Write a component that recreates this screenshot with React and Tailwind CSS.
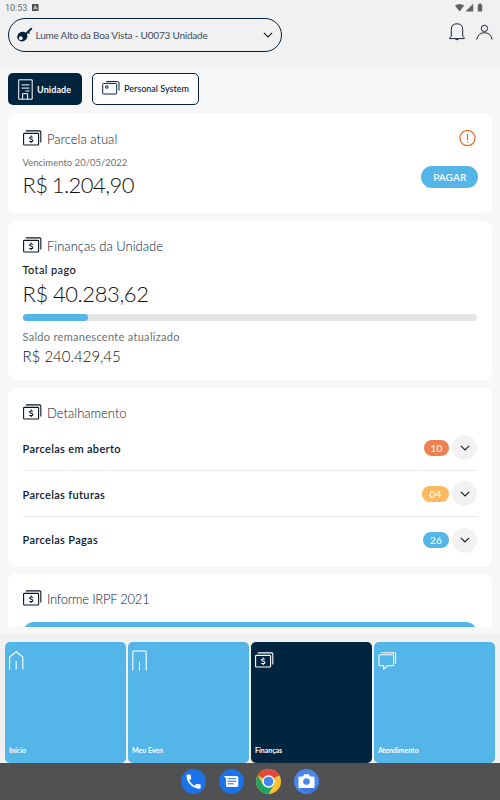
const ink = "#04213c";

function MoneyIcon({ color = "#0b1524", className = "" }) {
  return (
    <svg className={className} width="19" height="16" viewBox="0 0 19 16" fill="none" stroke={color} strokeWidth="1.1">
      <rect x="0.6" y="3.4" width="15" height="11.6" rx="0.8" />
      <path d="M2.8 0.9H16.7a1.1 1.1 0 0 1 1.1 1.1V12.5" />
      <path d="M9.9 7.5C9.5 6.7 6.6 6.6 6.6 8c0 1.5 3.3 1 3.3 2.5 0 1.5-3 1.4-3.5.4M8.2 5.6V6.8M8.2 11.7V13" strokeWidth="1.05" />
    </svg>
  );
}

function Chevron({ className = "" }) {
  return (
    <svg className={className} width="10" height="6" viewBox="0 0 10 6" fill="none" stroke="#111a26" strokeWidth="1.1">
      <path d="M0.9 0.8L5 4.9L9.1 0.8" />
    </svg>
  );
}

function Heading({ children, className = "" }) {
  return (
    <div className="flex h-4 items-center">
      <MoneyIcon className="shrink-0" />
      <h2 className={"ml-[5.5px] pt-px text-[13px] leading-4 font-light whitespace-nowrap text-[#04213c] " + className}>{children}</h2>
    </div>
  );
}

function Row({ label, count, pill, last }) {
  return (
    <div className={"flex h-[46px] items-center " + (last ? "" : "border-b border-[#e9e9e9]")}>
      <span className={"text-[11px] font-semibold tracking-[0.34px] whitespace-nowrap text-[#0b1b2e] " + (last ? "" : "pt-[3px]")}>{label}</span>
      <span className={"ml-auto flex h-4 items-center justify-center rounded-full pt-px text-[10px] tracking-[0.1px] text-white " + pill}>{count}</span>
      <span className="ml-[3px] flex size-[25px] items-center justify-center rounded-full bg-[#f2f2f2]">
        <Chevron />
      </span>
    </div>
  );
}

function HomeIcon() {
  return (
    <svg width="16" height="20" viewBox="0 0 16 20" fill="none" stroke="#fff" strokeWidth="1.1">
      <path d="M0.6 18.6V6L7.2 0.8L13.8 6V18.6M7.2 10V18.6" />
    </svg>
  );
}

function DoorIcon() {
  return (
    <svg width="16" height="21" viewBox="0 0 16 21" fill="none" stroke="#fff" strokeWidth="1.1">
      <path d="M0.8 20.4V1.8Q0.8 1 1.6 1H13.4Q14.2 1 14.2 1.8V20.4M7.5 12V20.4" />
    </svg>
  );
}

function ChatIcon() {
  return (
    <svg width="19" height="19" viewBox="0 0 19 19" fill="none" stroke="#fff" strokeWidth="1.1">
      <path d="M1.8 2.8H14.8Q15.6 2.8 15.6 3.6V13Q15.6 13.8 14.8 13.8H9.3L5.6 17V13.8H1.8Q1 13.8 1 13V3.6Q1 2.8 1.8 2.8Z" />
      <path d="M3.2 0.8H16.6Q17.6 0.8 17.6 1.8V11.5" />
    </svg>
  );
}

function Tile({ icon, label, dark, className = "" }) {
  return (
    <div className={"flex h-[120.5px] w-[120.7px] flex-col items-start justify-between rounded-[5px] px-1 pb-2 " + (dark ? "bg-[#01243f] " : "bg-[#54b6e8] ") + className}>
      {icon}
      <span className="text-[7px] leading-[10px] font-bold text-white">{label}</span>
    </div>
  );
}

export default function App() {
  return (
    <div className="flex h-[800px] w-[500px] flex-col overflow-hidden bg-[#f7f7f7] font-['Lato','Open_Sans',sans-serif]">
      <header className="h-[68px] shrink-0 bg-[#f1f1f1]">
        <div className="flex h-[15px] items-center pr-[17px] pl-[5px]">
          <span className="pt-px font-[Roboto] text-[9px] leading-[14px] text-[#6b6b6b]">10:53</span>
          <svg className="ml-[5px]" width="7" height="7" viewBox="0 0 7 7">
            <rect width="6.5" height="7" rx="0.6" fill="#4c4c4c" />
            <path d="M1.6 5.6L3.3 1.6L5 5.6M2.3 4.2H4.3" stroke="#f1f1f1" fill="none" strokeWidth="0.8" />
          </svg>
          <svg className="ml-auto" width="28" height="9" viewBox="0 0 28 9" fill="#616161">
            <path d="M0 2.6Q4.6 -0.8 9.2 2.6L4.6 8.4Z" />
            <path d="M18.2 0.7V8.4H10.5Z" />
            <path d="M22.8 1.4H24V0.6H26V1.4H27.2V8.4H22.8Z" />
          </svg>
        </div>
        <div className="flex pt-[3px] pl-2">
          <div className="flex h-[34px] w-[274px] items-center rounded-full border-[1.2px] border-[#04213c] pr-2 pl-[7.5px]">
            <svg width="16" height="16" viewBox="0 0 16 16">
              <path d="M6 9.6L14.8 1.2" stroke={ink} strokeWidth="1.9" />
              <path d="M10.9 5L12.6 6.4" stroke={ink} strokeWidth="1.3" />
              <ellipse cx="5.3" cy="9.6" rx="5.2" ry="4.7" transform="rotate(-32 5.3 9.6)" fill={ink} />
              <circle cx="3.8" cy="11.2" r="1.9" fill="#f1f1f1" />
            </svg>
            <span className="ml-[3px] pt-px text-[10px] tracking-[-0.21px] whitespace-nowrap text-[#3a4e62]">Lume Alto da Boa Vista - U0073 Unidade</span>
            <Chevron className="ml-auto" />
          </div>
          <svg className="mt-[5px] ml-[167px]" width="16" height="18" viewBox="0 0 16 18" fill="none" stroke="#1b2433" strokeWidth="1">
            <path d="M2.3 13.3V6.6Q2.3 0.8 8 0.8T13.7 6.6V13.3L15.3 14.7V15.6H0.7V14.7ZM6.3 16Q8 17.8 9.7 16" />
          </svg>
          <svg className="mt-[6px] ml-[11px]" width="17" height="17" viewBox="0 0 17 17" fill="none" stroke="#1b2433" strokeWidth="1">
            <circle cx="8.4" cy="4.4" r="3.2" />
            <path d="M0.7 15.5Q2.2 8.7 8.4 8.7T16.2 15.5" />
          </svg>
        </div>
      </header>

      <nav className="flex h-[37px] shrink-0 gap-[10px] pt-[5px] pl-2">
        <div className="flex w-[74px] items-center rounded-[5px] bg-[#01243f] pl-[10px]">
          <svg width="15" height="21" viewBox="0 0 15 21" fill="none" stroke="#fff" strokeWidth="1">
            <path d="M0.7 20.2V0.8H14.2V20.2Z" />
            <path d="M3.6 5.9H11.4M3.6 9.1H11.4M7.5 12H11.4M4.6 20V14.7H9.6V20" />
          </svg>
          <span className="ml-[4px] pt-0.5 text-[9px] font-bold tracking-[0.1px] text-white">Unidade</span>
        </div>
        <div className="flex w-[107px] rounded-[5px] border-[1.2px] border-[#04213c] bg-white pt-[7px] pl-[9px]">
          <svg width="18" height="14" viewBox="0 0 18 14" fill="none" stroke={ink} strokeWidth="1">
            <rect x="0.7" y="2.4" width="14" height="10.6" rx="1" />
            <path d="M4.2 0.6H15.6Q17 0.6 17 2V9.5" />
            <circle cx="4.8" cy="6" r="1.3" />
          </svg>
          <span className="ml-[4px] pt-px text-[9px] leading-[14px] font-medium whitespace-nowrap text-[#04213c]">Personal System</span>
        </div>
      </nav>

      <main className="mt-2 flex h-[514px] shrink-0 flex-col gap-2 overflow-hidden px-2">
        <section className="flex h-[100px] shrink-0 justify-between rounded-lg bg-white pt-[17px] pr-[14.5px] pl-[14.5px]">
          <div>
            <Heading>Parcela atual</Heading>
            <p className="mt-[10px] text-[9.5px] leading-[14px] whitespace-nowrap text-[#707070]">Vencimento 20/05/2022</p>
            <p className="mt-[2px] text-[22px] leading-[26px] font-light tracking-[-0.55px] [word-spacing:-1.2px] whitespace-nowrap text-[#111]">R$ 1.204,90</p>
          </div>
          <div className="flex flex-col items-end">
            <svg className="mr-[1px]" width="18" height="18" viewBox="0 0 18 18" fill="none" stroke="#ea6a22" strokeWidth="1.2">
              <circle cx="8.5" cy="8.1" r="7.6" />
              <path d="M8.5 3.9V9.9M8.5 11.3V12.6" />
            </svg>
            <button className="mt-[18px] h-[22px] w-[56.5px] rounded-full bg-[#54b6e8] pt-px pl-px text-[10px] font-semibold tracking-[0.1px] text-white">PAGAR</button>
          </div>
        </section>

        <section className="h-[159px] shrink-0 rounded-lg bg-white pr-[15px] pl-[14.5px] pt-4">
          <Heading>Finanças da Unidade</Heading>
          <p className="mt-[10px] text-[11px] leading-[14px] font-medium tracking-[0.38px] whitespace-nowrap text-[#111]">Total pago</p>
          <p className="mt-[4px] text-[22px] leading-[26px] font-light tracking-[-0.4px] [word-spacing:-0.5px] whitespace-nowrap text-[#111]">R$ 40.283,62</p>
          <div className="mt-[7px] h-[6.5px] rounded-full bg-[#e3e3e3]">
            <div className="h-full w-[65px] rounded-full bg-[#54b6e8]" />
          </div>
          <p className="mt-[9.5px] text-[11px] leading-[14px] tracking-[0.3px] whitespace-nowrap text-[#707070]">Saldo remanescente atualizado</p>
          <p className="mt-[3px] text-[15px] leading-[18px] font-light whitespace-nowrap text-[#111]">R$ 240.429,45</p>
        </section>

        <section className="h-[179px] shrink-0 rounded-lg bg-white pr-[15px] pl-[14.5px] pt-4">
          <Heading>Detalhamento</Heading>
          <div className="mt-[5px]">
            <Row label="Parcelas em aberto" count="10" pill="w-[25px] bg-[#ef8050]" />
            <Row label="Parcelas futuras" count="04" pill="w-[27px] bg-[#fcb95f]" />
            <Row label="Parcelas Pagas" count="26" pill="w-[26px] bg-[#54b6e8]" last />
          </div>
        </section>

        <section className="-mt-px h-[120px] shrink-0 rounded-lg bg-white pr-[15px] pl-[14.5px] pt-4">
          <Heading className="tracking-[-0.25px]">Informe IRPF 2021</Heading>
          <div className="mt-[15.5px] h-8 rounded-[11px] bg-[#54b6e8]" />
        </section>
      </main>

      <nav className="mt-[7px] flex h-[129px] shrink-0 gap-[2.3px] bg-[#f1f1f1] pt-2 pl-[5px]">
        <Tile className="pt-[9px]" icon={<HomeIcon />} label="Início" />
        <Tile className="pt-[8px]" icon={<DoorIcon />} label="Meu Even" />
        <Tile className="pt-[10px]" dark icon={<MoneyIcon color="#fff" />} label="Finanças" />
        <Tile className="pt-[10px]" icon={<ChatIcon />} label="Atendimento" />
      </nav>

      <footer className="flex h-[37px] shrink-0 items-center justify-center gap-[12.5px] bg-[#515153]">
        <svg width="25" height="25" viewBox="0 0 25 25">
          <circle cx="12.5" cy="12.5" r="12.5" fill="#1a73e8" />
          <path transform="translate(3.1 3.1) scale(0.79)" fill="#fff" d="M6.62 10.79c1.44 2.83 3.76 5.14 6.59 6.59l2.2-2.2c.27-.27.67-.36 1.02-.24 1.12.37 2.33.57 3.57.57.55 0 1 .45 1 1V20c0 .55-.45 1-1 1-9.39 0-17-7.61-17-17 0-.55.45-1 1-1h3.5c.55 0 1 .45 1 1 0 1.25.2 2.45.57 3.57.11.35.03.74-.25 1.02z" />
        </svg>
        <svg width="25" height="25" viewBox="0 0 25 25">
          <circle cx="12.5" cy="12.5" r="12.5" fill="#1a73e8" />
          <path d="M4.8 7H17.8Q19.3 7 19.3 8.5V16.5Q19.3 18 17.8 18H8.4Q6.9 18 6.9 16.5V9.2Z" fill="#fff" />
          <path d="M8.6 9.8H17.4M8.6 12.3H17.4M8.6 14.8H14.7" stroke="#1a73e8" strokeWidth="1" />
        </svg>
        <svg width="25" height="25" viewBox="0 0 50 50">
          <circle cx="25" cy="25" r="25" fill="#fbc12f" />
          <path d="M25 25L3.35 12.5A25 25 0 0 1 46.65 12.5Z" fill="#e04a3c" />
          <path d="M3.35 12.5A25 25 0 0 0 25 50L35.8 31.3L25 25L14.2 31.3Z" fill="#1fa463" />
          <circle cx="25" cy="25" r="12.5" fill="#fff" />
          <circle cx="25" cy="25" r="9.7" fill="#4285f4" />
        </svg>
        <svg width="25" height="25" viewBox="0 0 25 25">
          <circle cx="12.5" cy="12.5" r="12.5" fill="#4a86ee" />
          <path d="M20 18.5L24.2 16A12.5 12.5 0 0 1 13 25L6 18.8Z" fill="#3d76dc" />
          <path d="M5.7 7.5H9L10.2 5.2H14.8L16 7.5H19.3Q20.5 7.5 20.5 8.7V17.8Q20.5 19 19.3 19H5.7Q4.5 19 4.5 17.8V8.7Q4.5 7.5 5.7 7.5Z" fill="#fff" />
          <circle cx="12.5" cy="12.6" r="3.3" fill="#4a86ee" />
        </svg>
      </footer>
    </div>
  );
}
